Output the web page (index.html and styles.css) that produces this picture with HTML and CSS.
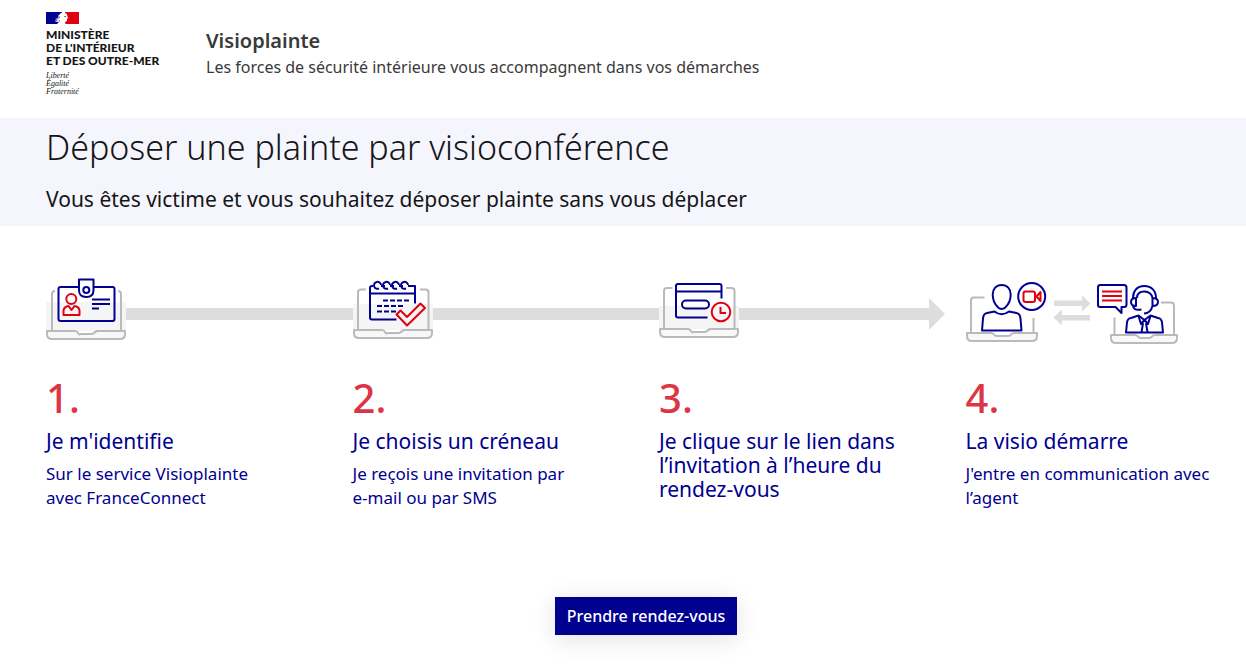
FILE: index.html
```html
<!DOCTYPE html>
<html lang="fr">
<head>
  <meta charset="utf-8">
  <meta name="viewport" content="width=device-width, initial-scale=1">
  <title>Visioplainte</title>
  <link rel="stylesheet" href="styles.css">
</head>
<body>
  <header class="header">
    <div class="logo">
      <svg class="logo-flag" width="33" height="12" viewBox="0 0 33 12" aria-hidden="true">
        <path fill="#000091" d="M0 0h16v12H0z"/>
        <path fill="#e1000f" d="M19 0h14v12H19z"/>
        <path fill="#fff" d="M15 1c3-1.500 6 0 6 2l1 3-1 1v2l-2 1 .5 2H11l2-2H9l3-2-3-1 4-1-1-2z"/>
        <path fill="#8585c6" d="M12 5l2-1v2l-3 1zM9 8h3l-2 2zM12 9l2-1v2z"/>
        <path fill="#777" d="M18 4h2v1h-2z"/>
      </svg>
      <p class="logo-name">Ministère<br>de l'intérieur<br>et des outre-mer</p>
      <p class="logo-motto">Liberté<br>Égalité<br>Fraternité</p>
    </div>
    <div class="service">
      <p class="service-title">Visioplainte</p>
      <p class="service-tagline">Les forces de sécurité intérieure vous accompagnent dans vos démarches</p>
    </div>
  </header>

  <section class="banner">
    <h1>Déposer une plainte par visioconférence</h1>
    <p>Vous êtes victime et vous souhaitez déposer plainte sans vous déplacer</p>
  </section>

  <main>
    <ol class="steps">
      <li class="step">
        <div class="step-figure">
          <svg class="icon" width="80" height="66" viewBox="0 0 80 66" aria-hidden="true">
            <path class="shade" d="M0 24h80v29H0z"/>
            <g class="grey">
              <path d="M6 53V16q0-3 3-3M72 13q3 0 3 3v37"/>
              <path class="base" d="M1 53h28q2 0 3 2t3 1h10q2 0 3-1t3-2h28v3q0 5-5 5H6q-5 0-5-5z"/>
            </g>
            <g class="blue">
              <path d="M33 9H14.500q-2 0-2 2v30q0 2 2 2h52q2 0 2-2V11q0-2-2-2H48"/>
              <path d="M33 1.500h14.500V12q0 7-7.300 7T33 12z"/>
              <circle cx="40.300" cy="12" r="3"/>
              <path d="M46 21.500h18M46 26h18M46 30.500h7"/>
            </g>
            <g class="red">
              <circle cx="25.300" cy="21" r="5"/>
              <path d="M17.500 37v-4q0-4 5-5l3 4 3-4q5 1 5 5v4z"/>
            </g>
          </svg>
          <span class="line"></span>
        </div>
        <p class="number">1.</p>
        <h2>Je m'identifie</h2>
        <p>Sur le service Visioplainte<br>avec FranceConnect</p>
      </li>
      <li class="step">
        <div class="step-figure">
          <svg class="icon" width="80" height="66" viewBox="0 0 80 66" aria-hidden="true">
            <path class="shade" d="M0 26h80v26H0z"/>
            <g class="grey">
              <path d="M13 11.500H8q-3 0-3 3V52M67 11.500h5.500q3 0 3 3V52"/>
              <path class="base" d="M1 52h28q2 0 3 2t3 1h10q2 0 3-1t3-2h28v3q0 5-5 5H6q-5 0-5-5z"/>
            </g>
            <g class="blue">
              <path d="M20 8h-1q-2 0-2 2v29.500q0 2 2 2h24.500M59 8h3v17.500M17 15.500h45"/>
              <path d="M26 10.500a3.500 3.500 0 1 1 2-3.500M35 10.500a3.500 3.500 0 1 1 2-3.500M44 10.500a3.500 3.500 0 1 1 2-3.500M53 10.500a3.500 3.500 0 1 1 2-3.500"/>
              <path d="M28 8h4M37 8h4M46 8h4M55 8h4"/>
              <path class="dash" d="M30 22.500h26M24 28h26M24 33.500h19"/>
            </g>
            <path class="red" d="M43.500 36.500l4-4 6.500 6.500 13.500-13.500 4.500 4.500-18 17.500z"/>
          </svg>
          <span class="line"></span>
        </div>
        <p class="number">2.</p>
        <h2>Je choisis un créneau</h2>
        <p>Je reçois une invitation par<br>e-mail ou par SMS</p>
      </li>
      <li class="step">
        <div class="step-figure">
          <svg class="icon" width="80" height="66" viewBox="0 0 80 66" aria-hidden="true">
            <path class="shade" d="M0 28h80v23H0z"/>
            <g class="grey">
              <path d="M13.500 10H8q-3 0-3 3v38M67 10h5.500q3 0 3 3v38"/>
              <path class="base" d="M1 51h28q2 0 3 2t3 1h10q2 0 3-1t3-2h28v3q0 5-5 5H6q-5 0-5-5z"/>
            </g>
            <g class="blue">
              <path d="M62.500 20.500V8q0-2-2-2H19q-2 0-2 2v29.500q0 2 2 2h29.500M17 13.500h45.500"/>
              <rect x="23" y="22.500" width="27" height="8" rx="4"/>
            </g>
            <g class="red">
              <circle cx="62" cy="34" r="9.300"/>
              <path d="M61.500 29v6h5.500"/>
            </g>
          </svg>
          <span class="line line-arrow"></span>
        </div>
        <p class="number">3.</p>
        <h2>Je clique sur le lien dans l’invitation à l’heure du rendez-vous</h2>
      </li>
      <li class="step">
        <div class="step-figure">
          <svg class="icon" width="213" height="66" viewBox="0 0 213 66" aria-hidden="true">
            <g class="grey">
              <path d="M18.500 19.500H8q-3 0-3 3V55M67.500 40v15"/>
              <path class="base" d="M1 55h24q2 0 3 1.500t3 1.500h11q2 0 3-1.500t3-1.500h23v3q0 5-5 5H6q-5 0-5-5z"/>
              <path d="M148.500 39.500V57M195 24.500h10q3 0 3 3V57"/>
              <path class="base" d="M145 57h24q2 0 3 1.500t3 1.500h8q2 0 3-1.500t3-1.500h22v3q0 5-5 5h-56q-5 0-5-5z"/>
            </g>
            <path class="arrows" d="M88 22.500h28V17.500l8.500 8-8.500 8v-5.500H88zM124 37v5.500H96v5l-8.500-8 8.500-8V37z"/>
            <g class="blue">
              <path d="M35.700 7c5.500 0 9 4 9 9.500 0 5-2.500 10-5 12.500-1.500 2.500-6.500 2.500-8 0-2.500-2.500-5-7.500-5-12.500 0-5.500 3.500-9.500 9-9.500z"/>
              <path fill="#fff" d="M16 52.500l1-12q.5-5 4-5.500l7.500-1.500q7 5.500 14.500 0l7.500 1.500q3.500.5 4 5.500l1 12z"/>
              <circle cx="65.700" cy="18.500" r="13.500"/>
              <path d="M134 7h24q2.500 0 2.500 2.500v17q0 2.500-2.500 2.500h-2.500v6l-6-6H134q-2 0-2-2.500v-17Q132 7 134 7z"/>
              <path d="M167 20c0-7 4-12 11.300-12S190 13 190 20M171 20c0-4 2.500-6.500 7.300-6.500s8 3 8.200 6.500M186.500 28q-2 7.500-8.500 7.500M170 20v8q-5 0-5-4t5-4zM186.500 20v8q5.500 0 5.500-4t-5.500-4zM167 28q1 5 8.500 3.500"/>
              <path fill="#fff" d="M160 54.500l1-10q.5-4 4-4.500l7.500-2.500 6 4.500 6-4.500 7.500 2.500q3.500.5 4 4.500l1 10z"/>
              <path d="M172.500 38l2.500 8 3.500-4 3.500 4 2.500-8M177 45l-1.500 9.500M180 45l1.500 9.500"/>
            </g>
            <g class="red">
              <rect x="57.500" y="13.500" width="11.500" height="10.500" rx="2"/>
              <path d="M70.500 18.500l4-4.500v9z"/>
              <path d="M136 13.500h20M136 18h20M136 22.500h20"/>
            </g>
          </svg>
        </div>
        <p class="number">4.</p>
        <h2>La visio démarre</h2>
        <p>J'entre en communication avec l’agent</p>
      </li>
    </ol>

    <div class="action">
      <button type="button" class="btn">Prendre rendez-vous</button>
    </div>
  </main>
</body>
</html>
```
FILE: styles.css
```css
body {
  margin: 0;
  font-family: "Noto Sans", "Open Sans", sans-serif;
  font-size: 16px;
  line-height: 24px;
  color: #161616;
  background-color: #fff;
}

h1, h2, p {
  margin: 0;
}

/* Header */
.header {
  display: flex;
  gap: 40px;
  padding: 12px 46px 22px;
}

.logo {
  flex: 0 0 120px;
}

.logo-flag {
  display: block;
}

.logo-name {
  margin-top: 4px;
  font-family: Lato, sans-serif;
  font-size: 12px;
  font-weight: 900;
  line-height: 13px;
  text-transform: uppercase;
  white-space: nowrap;
}

.logo-motto {
  margin-top: 5px;
  font-family: "Liberation Serif", serif;
  font-size: 8px;
  font-style: italic;
  line-height: 8px;
}

.service {
  padding-top: 15px;
  color: #3a3a3a;
}

.service-title {
  font-size: 20px;
  font-weight: 600;
  line-height: 28px;
}

/* Banner */
.banner {
  padding: 7px 46px 13px;
  background-color: #f5f5fe;
}

.banner h1 {
  font-size: 34px;
  font-weight: 300;
  line-height: 44px;
}

.banner p {
  margin-top: 16px;
  font-size: 21px;
  line-height: 28px;
}

/* Steps */
main {
  padding-left: 46px;
}

.steps {
  display: grid;
  grid-template-columns: repeat(4, 1fr);
  column-gap: 26px;
  margin: 0;
  padding: 52px 0 0;
  list-style: none;
  color: #000091;
}

.step > p,
.step h2 {
  padding-right: 24px;
}

.step > p {
  font-size: 17px;
}

.step h2 {
  margin-bottom: 9px;
  font-size: 21px;
  font-weight: 400;
  line-height: 24px;
}

.step .number {
  margin: 31px 0 8px;
  font-size: 40px;
  font-weight: 500;
  line-height: 46px;
  color: #dc3545;
}

.step-figure {
  display: flex;
  align-items: center;
  margin-right: -26px;
}

.icon {
  flex: none;
  fill: none;
  stroke-width: 2;
  stroke-linejoin: round;
}

.line {
  flex: 1;
  height: 12px;
  margin-top: 6px;
  background-color: #ddd;
}

.line-arrow {
  position: relative;
  margin-right: 37px;
}

.line-arrow::after {
  content: "";
  position: absolute;
  top: -10px;
  left: 100%;
  border: 16px solid transparent;
  border-right-width: 0;
  border-left-color: #ddd;
}

.shade {
  fill: #f5f5f5;
}

.grey {
  stroke: #bababa;
}

.base {
  fill: #f8f8f8;
}

.blue {
  stroke: #000091;
}

.red {
  stroke: #e1000f;
}

.dash {
  stroke-dasharray: 5 2;
}

.arrows {
  fill: #ddd;
}

/* Button */
.action {
  padding: 87px 0 32px;
  text-align: center;
}

.btn {
  padding: 7px 12px;
  border: 0;
  font: inherit;
  font-weight: 500;
  color: #fff;
  background-color: #000091;
  box-shadow: 0 4px 24px rgba(0, 0, 0, 0.12);
  cursor: pointer;
}
```
